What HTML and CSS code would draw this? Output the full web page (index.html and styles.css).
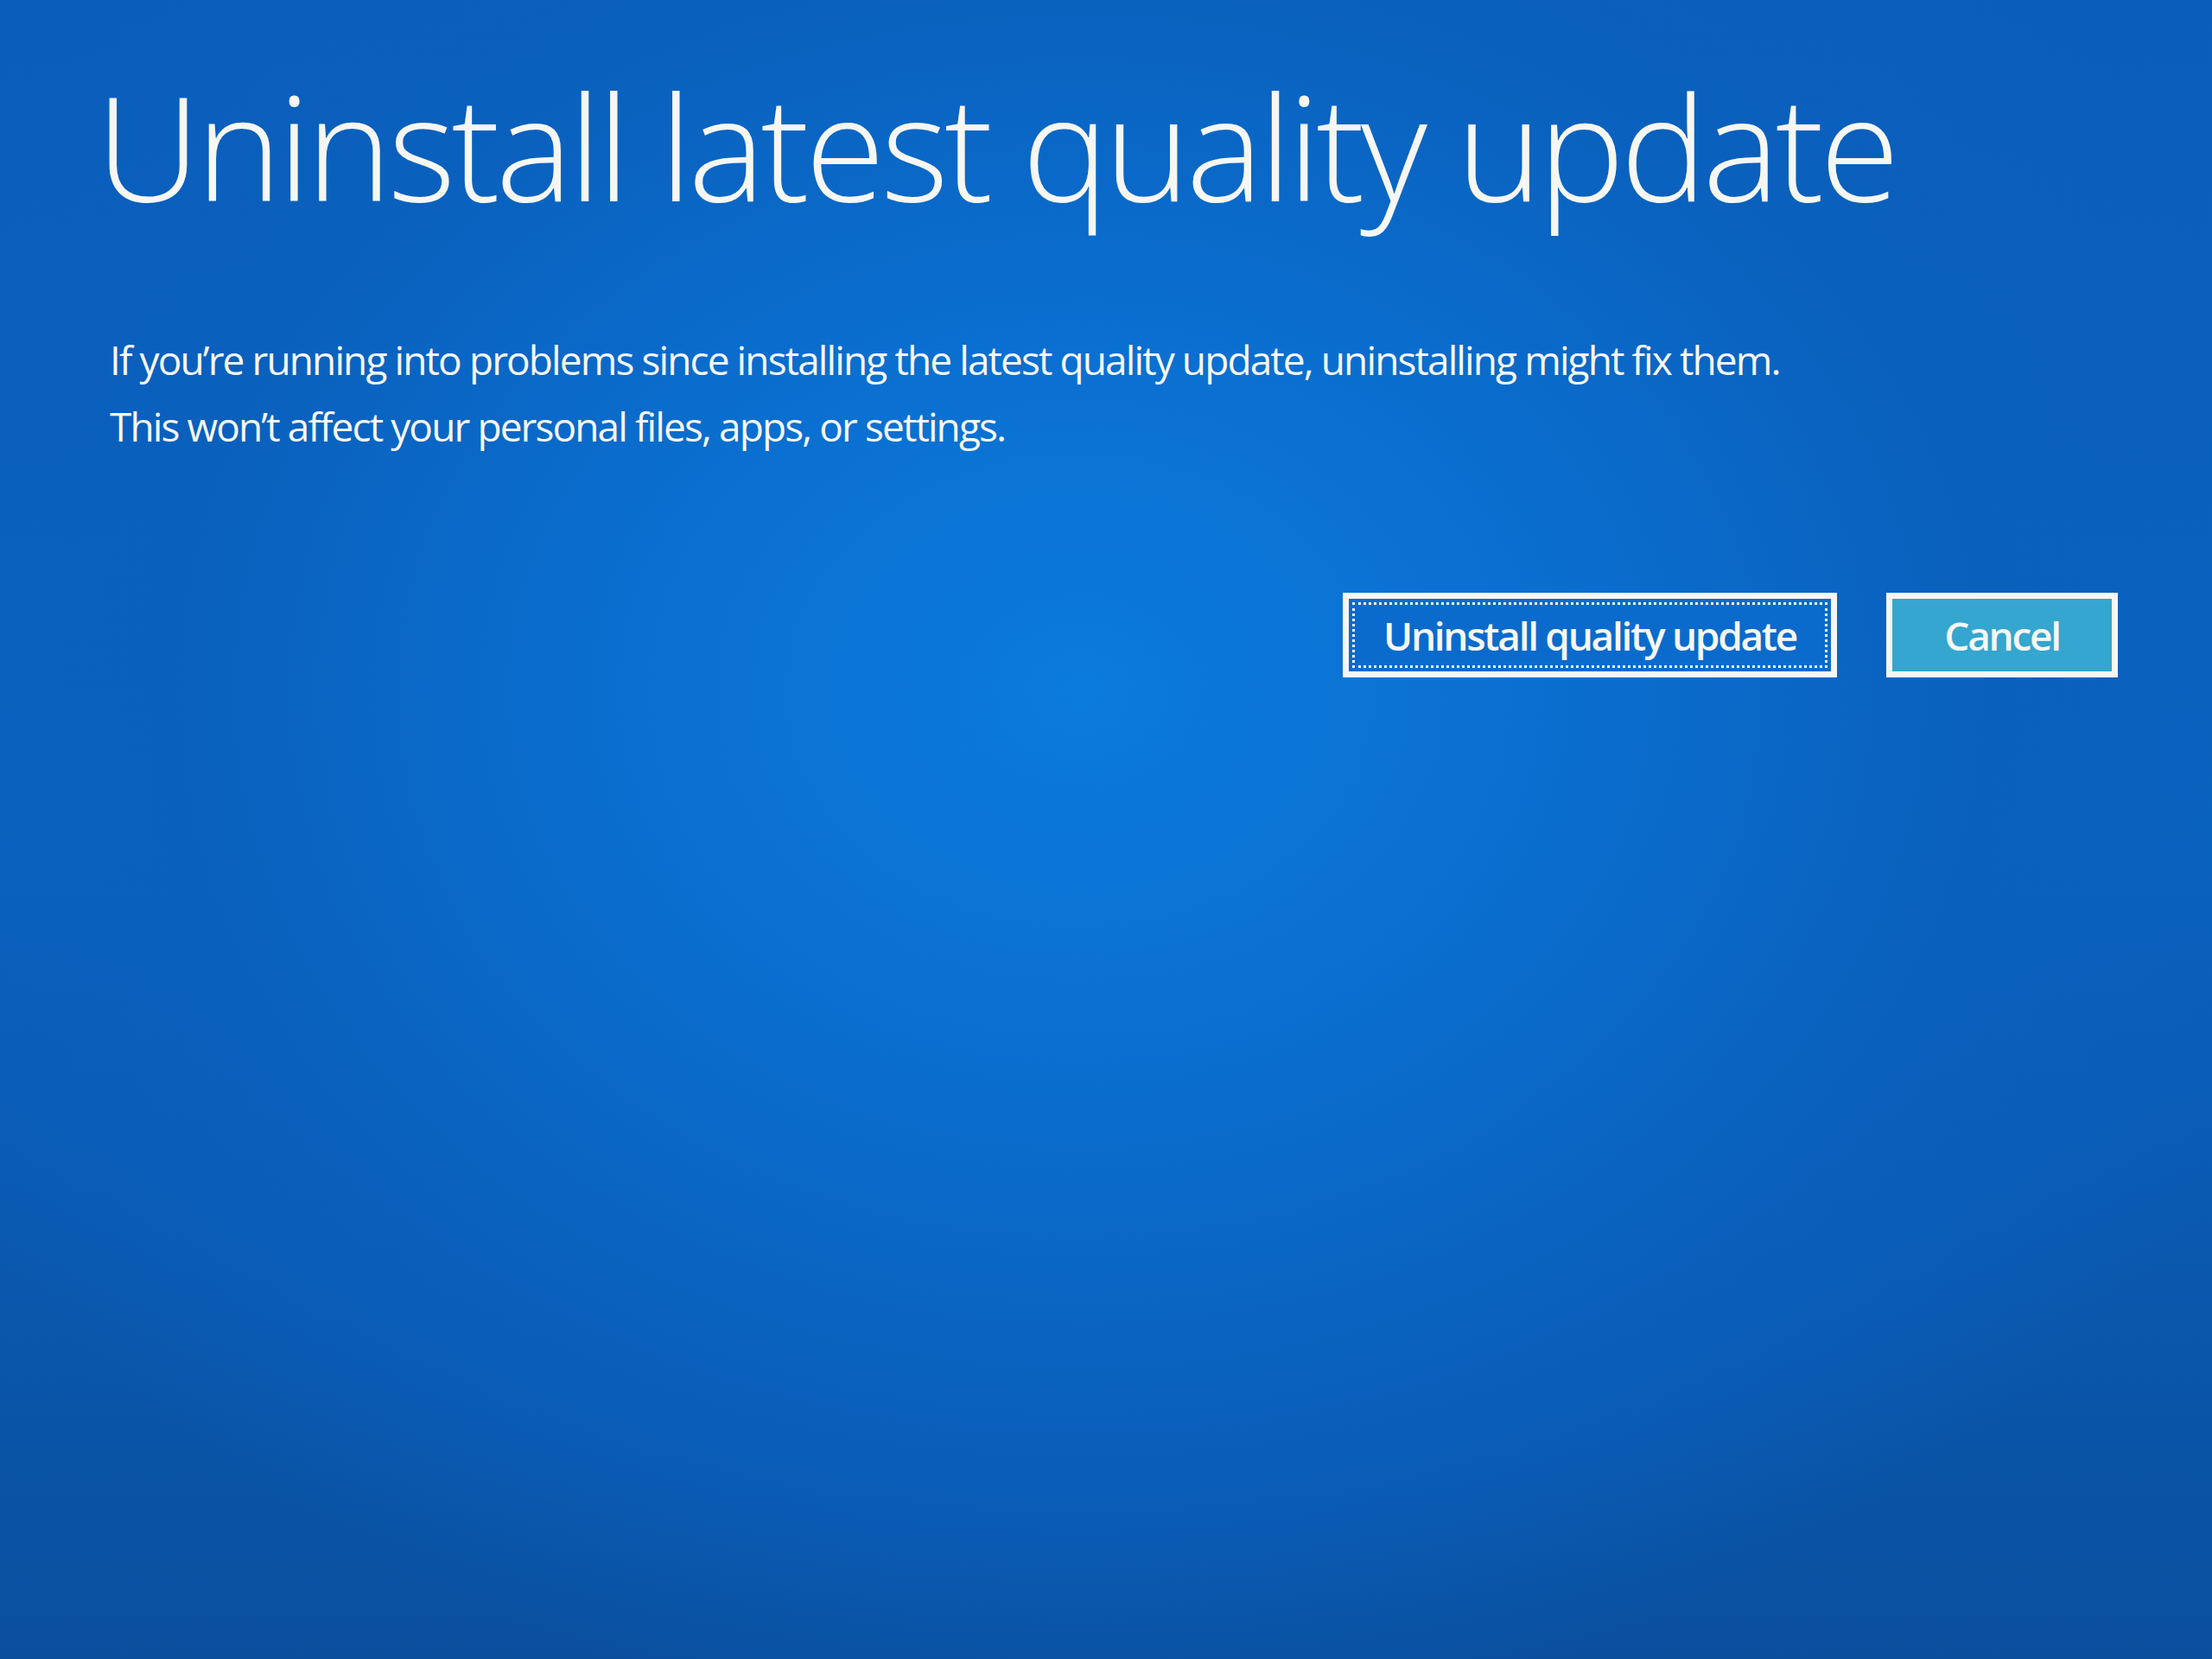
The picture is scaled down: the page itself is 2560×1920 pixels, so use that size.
FILE: index.html
```html
<!DOCTYPE html>
<html lang="en">
<head>
<meta charset="utf-8">
<title>Uninstall latest quality update</title>
<link rel="stylesheet" href="styles.css">
</head>
<body>
<main class="screen">
  <h1 class="title">Uninstall latest quality update</h1>
  <p class="desc">If you’re running into problems since installing the latest quality update, uninstalling might fix them.<br>This won’t affect your personal files, apps, or settings.</p>
  <div class="actions">
    <button class="btn btn-primary" type="button">Uninstall quality update</button>
    <button class="btn btn-cancel" type="button">Cancel</button>
  </div>
</main>
</body>
</html>
```

FILE: styles.css
```css
html, body {
  margin: 0;
  padding: 0;
  width: 2560px;
  height: 1920px;
  overflow: hidden;
}

body {
  font-family: "Open Sans", "Noto Sans", "Liberation Sans", sans-serif;
  color: #f6f7f2;
  background:
    radial-gradient(ellipse 1500px 1200px at 1250px 800px, #0b7bdc 0%, #0a6fd0 35%, #0a60bd 70%, rgba(10, 80, 170, 0) 100%),
    linear-gradient(180deg, #0b5dbb 0%, #0a62c0 50%, #0a4f9e 100%);
}

.screen {
  box-sizing: border-box;
  width: 2560px;
  height: 1920px;
  padding: 84px 109px 0 127px;
  display: flex;
  flex-direction: column;
}

.title {
  margin: 0 0 0 -16px;
  font-size: 168px;
  font-weight: 300;
  line-height: 1;
  letter-spacing: -4.8px;
  white-space: nowrap;
}

.desc {
  margin: 126px 0 0 0;
  font-size: 46px;
  font-weight: 400;
  line-height: 77px;
  letter-spacing: -1.9px;
  white-space: nowrap;
}

.actions {
  margin-top: 154px;
  display: flex;
  justify-content: flex-end;
  gap: 57px;
}

.btn {
  box-sizing: border-box;
  height: 98px;
  border: 7px solid #f6f7f2;
  font-family: "Open Sans", "Noto Sans", "Liberation Sans", sans-serif;
  font-size: 46px;
  font-weight: 650;
  letter-spacing: -2.3px;
  color: #f6f7f2;
  padding: 0;
  display: flex;
  align-items: center;
  justify-content: center;
}

.btn-primary {
  width: 572px;
  background: #0a6bcc;
  outline: 3px dotted #f6f7f2;
  outline-offset: -14px;
}

.btn-cancel {
  width: 268px;
  background: #34a6cf;
}
```
